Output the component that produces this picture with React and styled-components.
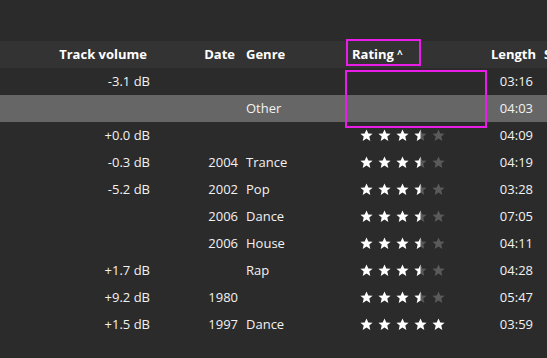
import React from 'react'
import styled, { createGlobalStyle } from 'styled-components'

const GlobalStyle = createGlobalStyle`
html, body {
  margin: 0;
  height: 100%;
  background: #2b2b2b;
}
body {
  font-family: "Open Sans", "Noto Sans", sans-serif;
  font-size: 13px;
  color: #f2f2f2;
  overflow: hidden;
}
`

const Page = styled.div`
  position: relative;
  width: 547px;
  height: 358px;
  background: #2b2b2b;
  padding-top: 41px;
  box-sizing: border-box;
  overflow: hidden;
`

const cols = '154px 88px 103px 140px 56px 60px'

const HeaderRow = styled.div`
  display: grid;
  grid-template-columns: ${cols};
  height: 27px;
  align-items: center;
  background: #333333;
  font-weight: 700;
  color: #ffffff;
  white-space: nowrap;
  padding-bottom: 2px;
  box-sizing: border-box;
`

const Row = styled.div`
  display: grid;
  grid-template-columns: ${cols};
  height: 27px;
  align-items: center;
  background: ${p => (p.$selected ? '#666666' : '#2b2b2b')};
  white-space: nowrap;
  padding-bottom: 2px;
  box-sizing: border-box;
`

const Cell = styled.div`
  padding: ${p => p.$pad || '0 4px'};
  text-align: ${p => p.$align || 'left'};
  overflow: hidden;
`

const SortArrow = styled.span`
  display: inline-block;
  margin-left: 3px;
  font-size: 10px;
  vertical-align: 1px;
`

const Stars = styled.div`
  display: flex;
  gap: 5px;
  padding-left: 15px;
  padding-top: 2px;
  align-items: center;
`

const Highlight = styled.div`
  position: absolute;
  border: 2px solid #e81ee8;
  box-sizing: border-box;
  pointer-events: none;
`

const STAR = 'M6.5 0.4 L8.3 4.4 L12.6 4.8 L9.3 7.6 L10.3 11.9 L6.5 9.6 L2.7 11.9 L3.7 7.6 L0.4 4.8 L4.7 4.4 Z'

const Star = ({ fill }) => (
  <svg width="13" height="13" viewBox="0 0 13 13">
    <defs>
      <clipPath id="halfclip">
        <rect x="0" y="0" width="6.5" height="13" />
      </clipPath>
    </defs>
    <path d={STAR} fill={fill === 1 ? '#ffffff' : '#5a5a5a'} />
    {fill === 0.5 && <path d={STAR} fill="#ffffff" clipPath="url(#halfclip)" />}
  </svg>
)

const Rating = ({ value }) => (
  <Stars>
    {[0, 1, 2, 3, 4].map(i => (
      <Star key={i} fill={value >= i + 1 ? 1 : value >= i + 0.5 ? 0.5 : 0} />
    ))}
  </Stars>
)

const tracks = [
  { vol: '-3.1 dB', date: '', genre: '', rating: null, len: '03:16' },
  { vol: '', date: '', genre: 'Other', rating: null, len: '04:03', selected: true },
  { vol: '+0.0 dB', date: '', genre: '', rating: 3.5, len: '04:09' },
  { vol: '-0.3 dB', date: '2004', genre: 'Trance', rating: 3.5, len: '04:19' },
  { vol: '-5.2 dB', date: '2002', genre: 'Pop', rating: 3.5, len: '03:28' },
  { vol: '', date: '2006', genre: 'Dance', rating: 3.5, len: '07:05' },
  { vol: '', date: '2006', genre: 'House', rating: 3.5, len: '04:11' },
  { vol: '+1.7 dB', date: '', genre: 'Rap', rating: 3.5, len: '04:28' },
  { vol: '+9.2 dB', date: '1980', genre: '', rating: 3.5, len: '05:47' },
  { vol: '+1.5 dB', date: '1997', genre: 'Dance', rating: 5, len: '03:59' },
]

const App = () => (
  <>
    <GlobalStyle />
    <Page>
      <HeaderRow>
        <Cell $align="right" $pad="0 7px 0 0">Track volume</Cell>
        <Cell $align="right" $pad="0 7px 0 0">Date</Cell>
        <Cell>Genre</Cell>
        <Cell $pad="0 0 0 7px">
          Rating<SortArrow>^</SortArrow>
        </Cell>
        <Cell $align="right" $pad="0 5px 0 0">Length</Cell>
        <Cell $pad="0 0 0 3px">Size</Cell>
      </HeaderRow>
      {tracks.map((t, i) => (
        <Row key={i} $selected={t.selected}>
          <Cell $align="right">{t.vol}</Cell>
          <Cell $align="right">{t.date}</Cell>
          <Cell>{t.genre}</Cell>
          <Cell $pad="0">{t.rating != null && <Rating value={t.rating} />}</Cell>
          <Cell $align="right" $pad="0 8px 0 0">{t.len}</Cell>
          <Cell />
        </Row>
      ))}
      <Highlight style={{ left: 346, top: 39, width: 75, height: 27 }} />
      <Highlight style={{ left: 345, top: 70, width: 142, height: 58 }} />
    </Page>
  </>
)

export default App
